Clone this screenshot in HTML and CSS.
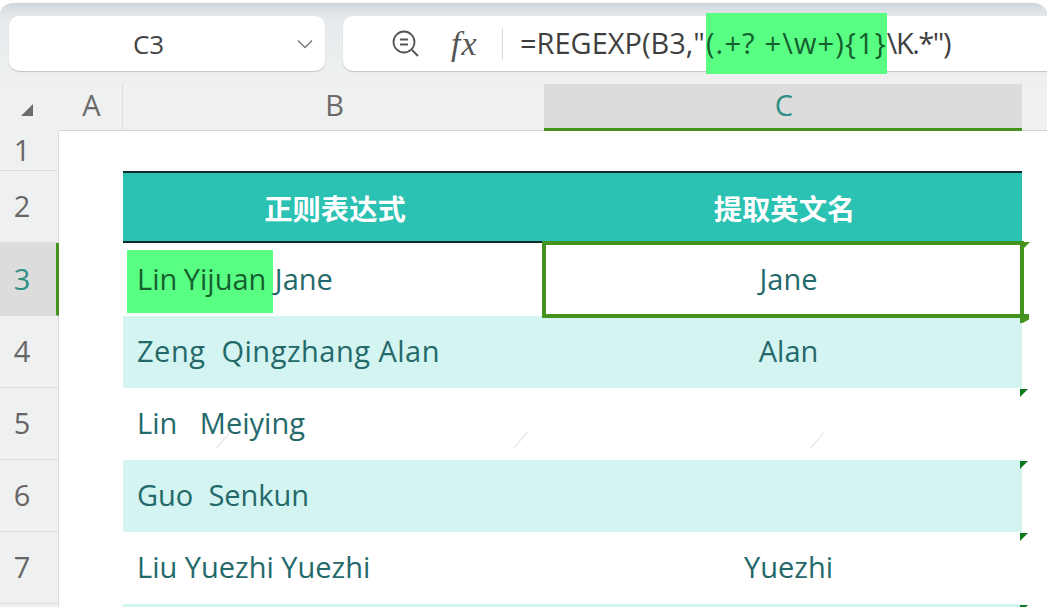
FILE: index.html
```html
<!DOCTYPE html>
<html lang="zh">
<head>
<meta charset="utf-8">
<title>REGEXP</title>
<link rel="stylesheet" href="styles.css">
</head>
<body>
<div class="app">
  <div class="toolbar">
    <div class="namebox">
      <span class="cellref">C3</span>
      <svg class="chevron" viewBox="0 0 16 10" width="16" height="10"><path d="M1 1.5 8 8.5 15 1.5" fill="none" stroke="#777" stroke-width="1.4"/></svg>
    </div>
    <div class="formulabox">
      <svg class="zoomicon" viewBox="0 0 30 30" width="30" height="30"><circle cx="13" cy="13" r="10.5" fill="none" stroke="#555" stroke-width="1.8"/><path d="M9 10.5h8M9 15.5h8M21 21l6 6" fill="none" stroke="#555" stroke-width="1.8"/></svg>
      <span class="fx">fx</span>
      <span class="divider"></span>
      <span class="formula">=REGEXP(B3,"<mark class="fhl">(.+? +\w+){1}</mark><span class="ftail">\K.*")</span></span>
    </div>
  </div>
  <div class="sheet">
    <div class="corner"><svg viewBox="0 0 14 14" width="14" height="14"><path d="M1 13 13 1V13Z" fill="#6b6b6b"/></svg></div>
    <div class="colhead a">A</div>
    <div class="colhead">B</div>
    <div class="colhead sel">C</div>
    <div class="colhead end"></div>

    <div class="rowhead">1</div>
    <div class="cell empty"></div><div class="cell empty"></div><div class="cell empty"></div><div class="blank"></div>

    <div class="rowhead">2</div>
    <div class="cell empty"></div>
    <div class="cell th">正则表达式</div>
    <div class="cell th">提取英文名</div>
    <div class="blank"></div>

    <div class="rowhead sel">3</div>
    <div class="cell empty"></div>
    <div class="cell name first"><span class="hl">Lin Yijuan </span>Jane</div>
    <div class="cell out active">Jane<i class="flag top"></i><i class="handle"></i></div>
    <div class="blank"></div>

    <div class="rowhead">4</div>
    <div class="cell empty"></div>
    <div class="cell name alt loose">Zeng&nbsp; Qingzhang Alan</div>
    <div class="cell out alt">Alan</div>
    <div class="blank"></div>

    <div class="rowhead">5</div>
    <div class="cell empty"></div>
    <div class="cell name">Lin&nbsp;&nbsp; Meiying<i class="tick t1"></i><i class="tick t2"></i></div>
    <div class="cell out">&nbsp;<i class="tick t3"></i><i class="flag"></i></div>
    <div class="blank"></div>

    <div class="rowhead">6</div>
    <div class="cell empty"></div>
    <div class="cell name alt">Guo&nbsp; Senkun</div>
    <div class="cell out alt">&nbsp;<i class="flag"></i></div>
    <div class="blank"></div>

    <div class="rowhead">7</div>
    <div class="cell empty"></div>
    <div class="cell name">Liu Yuezhi Yuezhi</div>
    <div class="cell out">Yuezhi<i class="flag"></i></div>
    <div class="blank"></div>

    <div class="rowhead"></div>
    <div class="cell empty"></div>
    <div class="cell alt"></div>
    <div class="cell alt"><i class="flag"></i></div>
    <div class="blank"></div>
  </div>
</div>
</body>
</html>
```

FILE: styles.css
```css
* { box-sizing: border-box; }
html, body { margin: 0; height: 100%; }
body {
  width: 1060px;
  height: 607px;
  overflow: hidden;
  background: #fff;
  font-family: "Open Sans", "Noto Sans", "Noto Sans CJK SC", sans-serif;
  color: #3d3d3d;
}
.app {
  width: 1047px;
  height: 607px;
  overflow: hidden;
  background: #eff0f0;
  border-radius: 14px 14px 0 0;
}
.toolbar {
  height: 84px;
  padding: 13px 0 0 9px;
  display: flex;
  gap: 18px;
  align-items: flex-start;
  background: linear-gradient(#ccd3d8 0, #d7dde1 4px, #e6eaec 16px, #eef0f0 72px);
  border-top: 3px solid #fff;
  border-radius: 14px 14px 0 0;
}
.namebox {
  width: 316px;
  height: 55px;
  background: #fff;
  border-radius: 10px;
  box-shadow: 0 1px 1px #c4c4c4;
  display: flex;
  align-items: center;
  position: relative;
  justify-content: center;
  flex: none;
}
.cellref { font-size: 26px; color: #444; margin-right: 37px; }
.chevron { position: absolute; right: 12px; top: 23px; }
.formulabox {
  flex: 1;
  height: 55px;
  background: #fff;
  border-radius: 10px 0 0 10px;
  box-shadow: 0 1px 1px #c4c4c4;
  display: flex;
  align-items: center;
  padding-left: 48px;
}
.zoomicon { flex: none; }
.fx {
  font-family: "Liberation Serif", serif;
  font-style: italic;
  font-size: 34px;
  color: #555;
  margin-left: 30px;
  width: 51px;
  letter-spacing: 1px;
}
.divider { width: 1px; height: 32px; background: #d8d8d8; margin-right: 17px; }
.formula { font-size: 29px; color: #3f3f3f; white-space: nowrap; }
.fhl {
  display: inline-block;
  background: #58ff82;
  color: #14602f;
  height: 61px;
  line-height: 60px;
  margin-left: 1px;
  letter-spacing: 1.15px;
}
.ftail { letter-spacing: -1.5px; }
.sheet {
  display: grid;
  grid-template-columns: 59px 64px 421px 478px 25px;
  grid-template-rows: 47px 40px 72px 73px 72px 72px 72px 72px 10px;
  background: #fff;
  height: 523px;
}
.corner, .colhead, .rowhead { background: #eff0f0; }
.corner { display: flex; align-items: center; justify-content: center; padding: 5px 5px 0 0; }
.colhead {
  display: flex; align-items: center; justify-content: center;
  font-size: 29px; color: #6a6a6a;
  border-bottom: 1px solid #d4d4d4;
  padding: 0 0 5px 2px;
}
.colhead.a { border-right: 1px solid #dcdcdc; }
.colhead.sel {
  background: #dcdcdc;
  color: #2f8f83;
  border-bottom: 3px solid #44931f;
  padding-bottom: 3px;
}
.rowhead {
  display: flex; align-items: center; justify-content: center;
  font-size: 29px; color: #666;
  border-right: 1px solid #dcdcdc;
  border-bottom: 1px solid #dcdcdc;
  padding-right: 14px;
  padding-bottom: 2px;
}
.rowhead.sel {
  background: #dcdcdc;
  color: #2f8f83;
  border-right: 3px solid #44931f;
  padding-right: 12px;
}
.blank { background: #fff; }
.cell { position: relative; background: #fff; display: flex; align-items: center; font-size: 29px; color: #24696a; white-space: pre; padding-bottom: 3px; }
.th {
  background: #2bc1b3;
  color: #fff;
  justify-content: center;
  font-family: "Noto Sans CJK SC", sans-serif;
  font-weight: 700;
  font-size: 28.3px;
  border-top: 2px solid #0a2a2a;
  border-bottom: 2px solid #0a2a2a;
  padding: 0 0 0 3px;
}
.name { padding-left: 14px; }
.loose { letter-spacing: .5px; }
.out { justify-content: center; padding-left: 11px; }
.alt { background: #d3f4f1; }
.hl {
  display: flex; align-items: center;
  margin: 7px 2px 0 -10px;
  padding: 0 0 7px 10px;
  height: 63px;
  word-spacing: -1px;
  background: #58ff82;
  color: #14602f;
  white-space: pre;
}
.active {
  outline: 4px solid #44931f;
  outline-offset: -2px;
  z-index: 2;
}
.flag {
  position: absolute;
  top: 1px; right: -6px;
  width: 0; height: 0;
  border-top: 8px solid #0c7a1c;
  border-right: 8px solid transparent;
}
.flag.top { top: -1px; right: -8px; border-top-color: #44931f; }
.handle {
  position: absolute;
  right: -7px; bottom: -7px;
  width: 9px; height: 9px;
  background: #44931f;
  clip-path: polygon(0 0, 100% 0, 100% 60%, 30% 100%, 0 100%);
}
.tick { position: absolute; width: 1px; height: 20px; background: #e2e2e2; transform: rotate(40deg); bottom: 10px; }
.t1 { left: 100px; }
.t2 { left: 397px; }
.t3 { left: 273px; }
```
